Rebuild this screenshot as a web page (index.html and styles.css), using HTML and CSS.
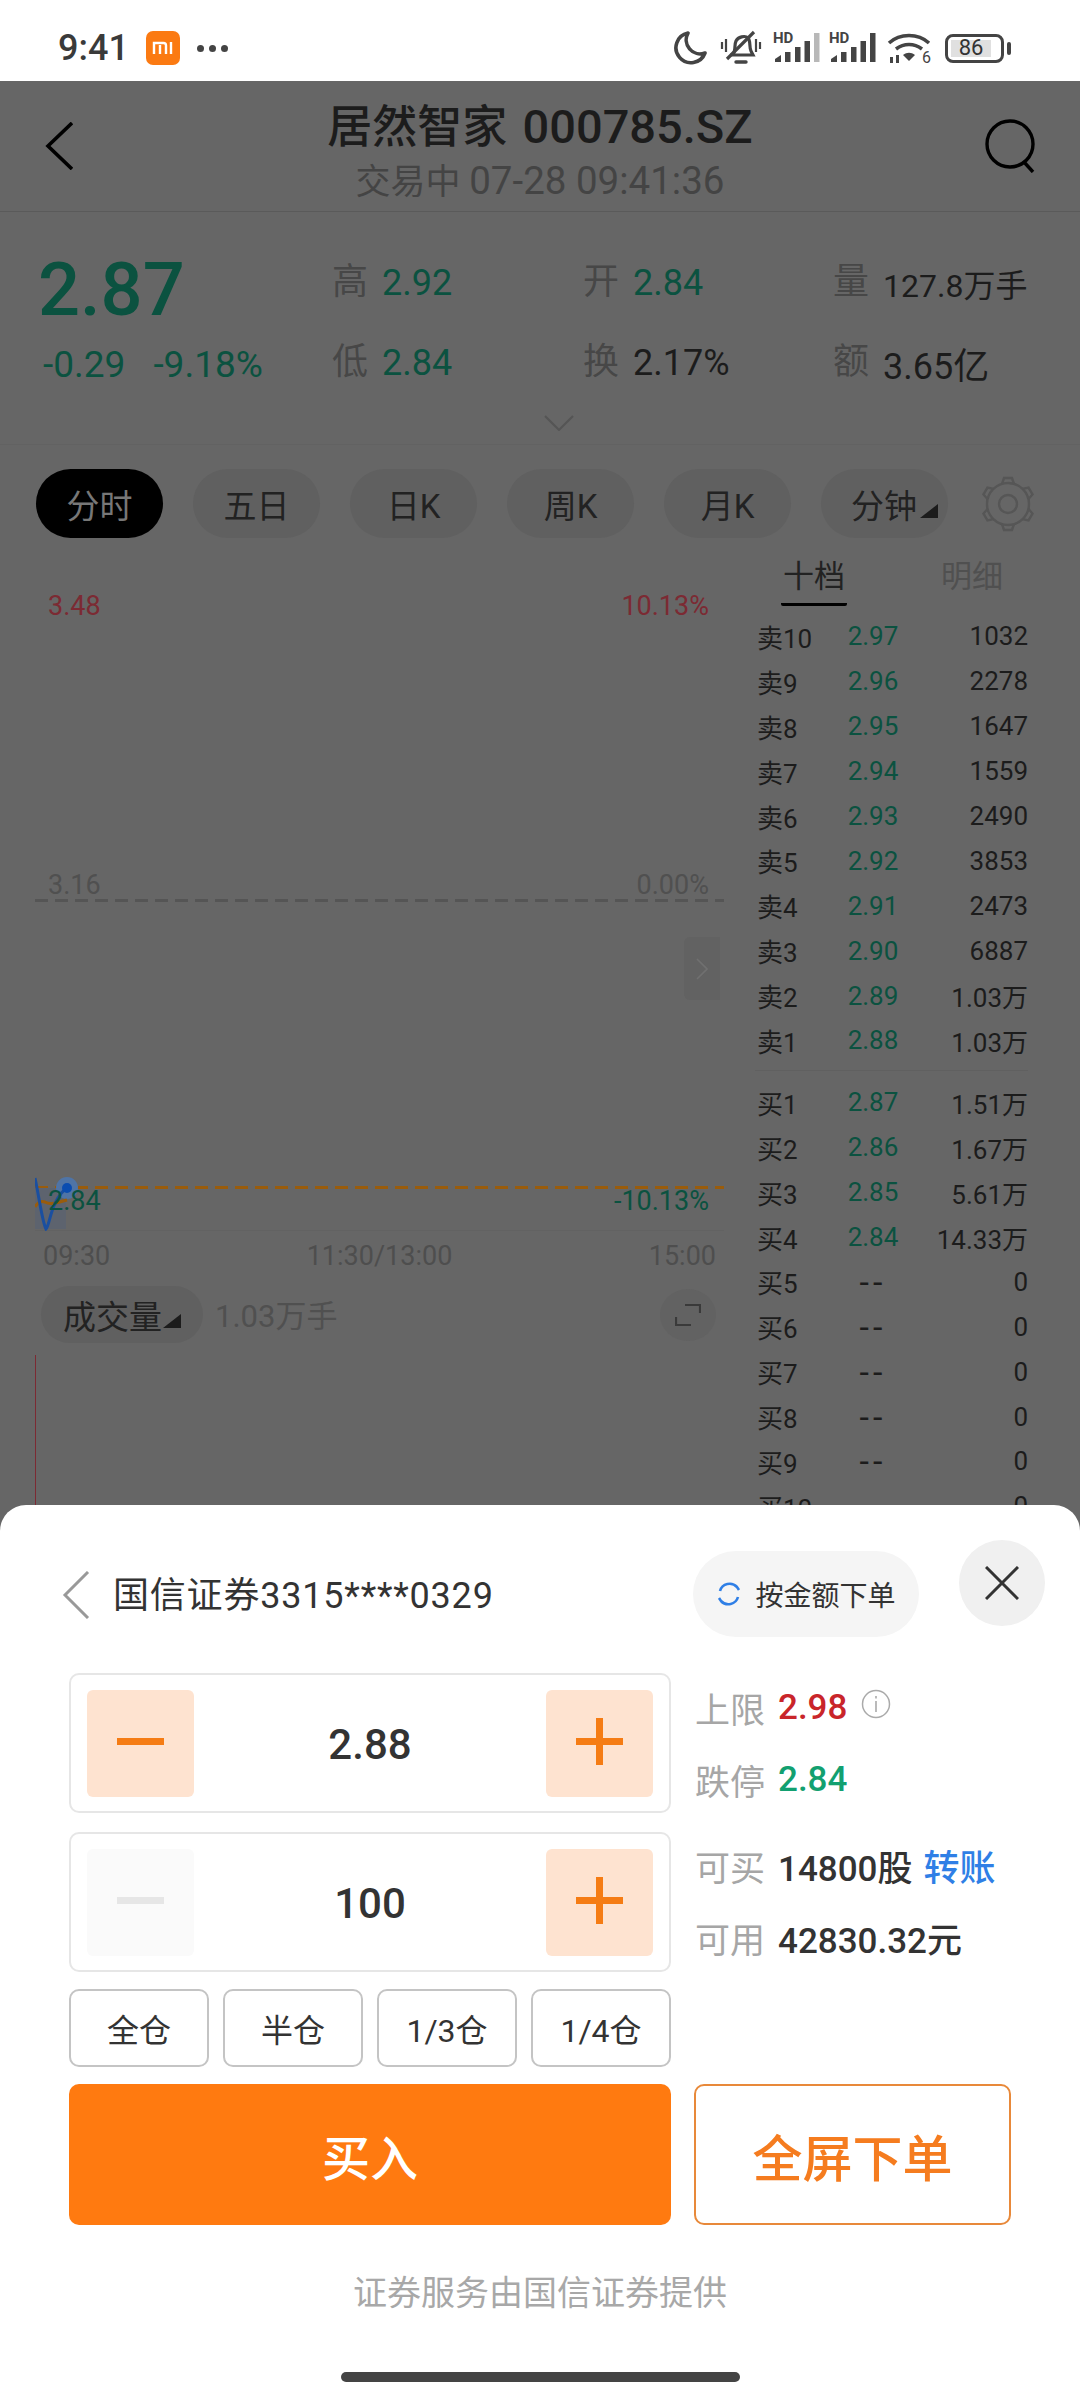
FILE: index.html
```html
<!DOCTYPE html>
<html lang="zh-CN">
<head>
    <meta charset="UTF-8">
    <meta name="viewport" content="width=device-width, initial-scale=1">
    <title>居然智家 000785.SZ</title>
    <link rel="stylesheet" href="styles.css">
</head>
<body>
<div class="phone">

    <div class="status">
        <span class="clock">9:41</span>
        <svg class="mi" width="34" height="34" viewBox="0 0 34 34">
            <rect width="34" height="34" rx="7" fill="#fb7a12"/>
            <path d="M8 23V12h9.500a2.500 2.500 0 0 1 2.500 2.500V23M14 14v9M25 11v12" fill="none" stroke="#fff" stroke-width="2.400"/>
        </svg>
        <span class="dots"><i></i><i></i><i></i></span>
        <span class="status-right">
            <svg width="36" height="36" viewBox="0 0 36 36"><path d="M15 3a15 15 0 1 0 17 20A14 14 0 0 1 15 3z" fill="none" stroke="#444" stroke-width="3.600" stroke-linejoin="round"/></svg>
            <svg class="ico-bell" width="42" height="38" viewBox="0 0 42 38">
                <path d="M13 25c3-3 1-9 3-13 2-4 9-6 12-3 3 3 1 10 3 13l2 4H11z" fill="none" stroke="#444" stroke-width="3.200"/>
                <path d="M7 30 34 3" stroke="#444" stroke-width="3.200"/>
                <path d="M16 33h10" stroke="#444" stroke-width="3.400" stroke-linecap="round"/>
                <path d="M2 13v7M6 10v13M36 10v13M40 13v7" stroke="#444" stroke-width="2.200"/>
            </svg>
            <svg class="ico-signal one" width="48" height="36" viewBox="0 -4 48 36">
                <text x="0" y="11" class="hd">HD</text>
                <path d="M2 27l6-4v7H2z" fill="#444"/>
                <path d="M12 20h5.500v10H12zM22 15h5.500v15H22zM31.500 9H37v21h-5.500z" fill="#444"/>
                <path d="M41 1h5.500v29H41z" fill="#b8b8b8"/>
            </svg>
            <svg class="ico-signal two" width="48" height="36" viewBox="0 -4 48 36">
                <text x="0" y="11" class="hd">HD</text>
                <path d="M2 27l6-4v7H2z" fill="#444"/>
                <path d="M12 20h5.500v10H12zM22 15h5.500v15H22zM31.500 9H37v21h-5.500zM41 1h5.500v29H41z" fill="#444"/>
            </svg>
            <svg class="ico-wifi" width="46" height="36" viewBox="0 0 46 36">
                <path d="M2 11C13 1 31 1 42 11M9 17c8-6 18-6 26 0" fill="none" stroke="#444" stroke-width="3.600"/>
                <path d="M16 23c4-3 8-3 12 0l-6 6z" fill="#444"/>
                <path d="M3 25h3v6H3zM9 23h3v8H9z" fill="#444"/>
                <text x="35" y="31" class="wifi-n">6</text>
            </svg>
            <span class="battery"><span class="battery-fill">86</span></span>
            <i class="battery-nub"></i>
        </span>
    </div>

    <header class="topbar">
        <svg class="back" width="28" height="48" viewBox="0 0 28 48"><path d="M27 1 3 24l24 23" fill="none" stroke="#000" stroke-width="3.600"/></svg>
        <div class="topbar-title">
            <h1>居然智家 <span>000785.SZ</span></h1>
            <p>交易中 <span>07-28 09:41:36</span></p>
        </div>
        <svg class="search" width="52" height="54" viewBox="0 0 52 54">
            <circle cx="25" cy="25" r="23" fill="none" stroke="#000" stroke-width="3.400"/>
            <path d="M39 43l9 10" stroke="#000" stroke-width="3.400"/>
        </svg>
    </header>

    <section class="quote">
        <div class="quote-main">
            <div class="price">2.87</div>
            <div class="change"><span>-0.29</span><span>-9.18%</span></div>
        </div>
        <div class="stats">
            <div class="stat"><b>高</b><span class="down">2.92</span></div>
            <div class="stat"><b>开</b><span class="down">2.84</span></div>
            <div class="stat"><b>量</b><span class="qty">127.8万手</span></div>
            <div class="stat"><b>低</b><span class="down">2.84</span></div>
            <div class="stat"><b>换</b><span>2.17%</span></div>
            <div class="stat"><b>额</b><span>3.65亿</span></div>
        </div>
    </section>
    <div class="more">
        <svg width="30" height="16" viewBox="0 0 30 16"><path d="M1 1l14 14L29 1" fill="none" stroke="#555" stroke-width="2"/></svg>
    </div>

    <nav class="tabs">
        <span class="tab active">分时</span>
        <span class="tab">五日</span>
        <span class="tab">日K</span>
        <span class="tab">周K</span>
        <span class="tab">月K</span>
        <span class="tab menu">分钟<i class="tri"></i></span>
        <svg class="gear" width="56" height="56" viewBox="0 0 56 56">
            <g fill="none" stroke="#565656" stroke-width="2.400">
                <circle cx="28" cy="28" r="9"/>
                <circle cx="28" cy="28" r="21"/>
                <path id="tooth" d="M22 8l2-6h8l2 6"/>
                <use href="#tooth" transform="rotate(60 28 28)"/>
                <use href="#tooth" transform="rotate(120 28 28)"/>
                <use href="#tooth" transform="rotate(180 28 28)"/>
                <use href="#tooth" transform="rotate(240 28 28)"/>
                <use href="#tooth" transform="rotate(300 28 28)"/>
            </g>
        </svg>
    </nav>

    <main class="market">
        <section class="chart">
            <div class="chart-row first up"><span>3.48</span><span>10.13%</span></div>
            <div class="chart-row middle flat"><span>3.16</span><span>0.00%</span></div>
            <div class="dash grey"></div>
            <div class="page-arrow">
                <svg width="12" height="22" viewBox="0 0 12 22"><path d="M1 1l10 10L1 21" fill="none" stroke="#707070" stroke-width="1.600"/></svg>
            </div>
            <div class="dash orange"></div>
            <svg class="trend" width="46" height="64" viewBox="0 0 46 64">
                <path d="M0 21h31v41H0z" fill="#5d636e"/>
                <circle cx="32" cy="21" r="11" fill="#4f74a6"/>
                <path d="M0 40c3-5 7-6 10-5 5 3 10 1 22-2" fill="none" stroke="#995c0c" stroke-width="3"/>
                <path d="M0 11c4 18 7 43 11 51 4-4 5-30 21-41" fill="none" stroke="#1a4fa0" stroke-width="3"/>
                <circle cx="32" cy="21" r="5" fill="#0b4db0"/>
            </svg>
            <div class="chart-row low green"><span>2.84</span><span>-10.13%</span></div>
            <div class="times"><span>09:30</span><span>11:30/13:00</span><span>15:00</span></div>
            <div class="volume">
                <span class="volume-pill">成交量<i class="tri"></i></span>
                <span class="volume-num">1.03万手</span>
                <span class="expand">
                    <svg width="26" height="24" viewBox="0 0 26 24"><path d="M10 2h15v8M16 22H1v-8" fill="none" stroke="#3a3a3a" stroke-width="2.200"/></svg>
                </span>
            </div>
            <div class="vol-bar"></div>
        </section>

        <aside class="book">
            <div class="book-tabs">
                <span class="book-tab active">十档</span>
                <span class="book-tab">明细</span>
            </div>
            <div class="book-list">
                <div class="row"><span>卖10</span><span class="down">2.97</span><span>1032</span></div>
                <div class="row"><span>卖9</span><span class="down">2.96</span><span>2278</span></div>
                <div class="row"><span>卖8</span><span class="down">2.95</span><span>1647</span></div>
                <div class="row"><span>卖7</span><span class="down">2.94</span><span>1559</span></div>
                <div class="row"><span>卖6</span><span class="down">2.93</span><span>2490</span></div>
                <div class="row"><span>卖5</span><span class="down">2.92</span><span>3853</span></div>
                <div class="row"><span>卖4</span><span class="down">2.91</span><span>2473</span></div>
                <div class="row"><span>卖3</span><span class="down">2.90</span><span>6887</span></div>
                <div class="row"><span>卖2</span><span class="down">2.89</span><span>1.03万</span></div>
                <div class="row"><span>卖1</span><span class="down">2.88</span><span>1.03万</span></div>
            </div>
            <div class="book-list bids">
                <div class="row"><span>买1</span><span class="down">2.87</span><span>1.51万</span></div>
                <div class="row"><span>买2</span><span class="down">2.86</span><span>1.67万</span></div>
                <div class="row"><span>买3</span><span class="down">2.85</span><span>5.61万</span></div>
                <div class="row"><span>买4</span><span class="down">2.84</span><span>14.33万</span></div>
                <div class="row"><span>买5</span><span class="nil">--</span><span>0</span></div>
                <div class="row"><span>买6</span><span class="nil">--</span><span>0</span></div>
                <div class="row"><span>买7</span><span class="nil">--</span><span>0</span></div>
                <div class="row"><span>买8</span><span class="nil">--</span><span>0</span></div>
                <div class="row"><span>买9</span><span class="nil">--</span><span>0</span></div>
                <div class="row"><span>买10</span><span class="nil">--</span><span>0</span></div>
            </div>
        </aside>
    </main>

    <!-- order sheet sits over the dimmed page -->
    <section class="sheet">
        <div class="sheet-head">
            <svg class="sheet-back" width="28" height="48" viewBox="0 0 28 48"><path d="M26 1 3 24l23 23" fill="none" stroke="#999" stroke-width="3"/></svg>
            <span class="account">国信证券3315****0329</span>
            <span class="by-amount">
                <svg width="26" height="26" viewBox="0 0 26 26">
                    <path d="M4 10a10 10 0 0 1 17-4l2 3" fill="none" stroke="#2f7fe6" stroke-width="2.600"/>
                    <path d="M22 16a10 10 0 0 1-17 4l-2-3" fill="none" stroke="#2f7fe6" stroke-width="2.600"/>
                </svg>
                按金额下单
            </span>
            <span class="close">
                <svg width="34" height="34" viewBox="0 0 34 34"><path d="M1 1l32 32M33 1 1 33" stroke="#333" stroke-width="3"/></svg>
            </span>
        </div>

        <div class="trade">
            <div class="trade-left">
                <div class="stepper">
                    <span class="step"><i class="minus"></i></span>
                    <span class="step-value">2.88</span>
                    <span class="step"><i class="plus"></i></span>
                </div>
                <div class="stepper">
                    <span class="step off"><i class="minus"></i></span>
                    <span class="step-value">100</span>
                    <span class="step"><i class="plus"></i></span>
                </div>
                <div class="ratios">
                    <span>全仓</span><span>半仓</span><span>1/3仓</span><span>1/4仓</span>
                </div>
            </div>
            <div class="info">
                <div class="info-row"><label>上限</label><b class="red">2.98</b>
                    <svg class="tip" width="30" height="30" viewBox="0 0 30 30">
                        <circle cx="15" cy="15" r="13.500" fill="none" stroke="#aaa" stroke-width="1.500"/>
                        <path d="M15 12v11M15 7v2.500" stroke="#aaa" stroke-width="1.600"/>
                    </svg>
                </div>
                <div class="info-row"><label>跌停</label><b class="green">2.84</b></div>
                <div class="info-row gap"><label>可买</label><b>14800股</b><a class="transfer">转账</a></div>
                <div class="info-row"><label>可用</label><b>42830.32元</b></div>
            </div>
        </div>

        <div class="actions">
            <button class="buy">买入</button>
            <button class="full">全屏下单</button>
        </div>

        <p class="provider">证券服务由国信证券提供</p>
        <div class="home-bar"></div>
    </section>
</div>
</body>
</html>
```

FILE: styles.css
```css
* {
    box-sizing: border-box;
}

html, body {
    margin: 0;
    padding: 0;
}

body {
    font-family: Roboto, "Noto Sans CJK SC", sans-serif;
    background-color: #666;
    color: #1c1c1c;
}

i {
    font-style: normal;
}

.phone {
    position: relative;
    width: 1080px;
    height: 2400px;
    overflow: hidden;
    background-color: #666;
}

/* status bar */
.status {
    height: 81px;
    background-color: #fff;
    display: flex;
    align-items: center;
    padding: 15px 69px 0 58px;
}

.clock {
    font-size: 36px;
    font-weight: 500;
    color: #3a3a3a;
}

.mi {
    margin-left: 17px;
}

.dots {
    display: flex;
    gap: 5px;
    margin-left: 17px;
}

.dots i {
    width: 7px;
    height: 7px;
    border-radius: 50%;
    background-color: #444;
}

.status-right {
    margin-left: auto;
    display: flex;
    align-items: center;
}

.ico-bell {
    margin-left: 11px;
}

.ico-signal {
    margin-top: -4px;
}

.ico-signal.one {
    margin-left: 11px;
}

.ico-signal.two {
    margin-left: 8px;
}

.ico-wifi {
    margin: 4px 0 0 10px;
}

.hd {
    font-size: 15px;
    font-weight: 700;
    fill: #444;
}

.wifi-n {
    font-size: 16px;
    fill: #444;
}

.battery {
    width: 59px;
    height: 29px;
    border: 3.500px solid #444;
    border-radius: 8px;
    padding: 3px;
    margin-left: 12px;
    display: flex;
}

.battery-fill {
    width: 40px;
    background-color: #e0e0e0;
    font-size: 22px;
    line-height: 16px;
    color: #333;
    text-align: center;
}

.battery-nub {
    width: 4px;
    height: 13px;
    border-radius: 2px;
    background-color: #444;
    margin-left: 3px;
}

/* header */
.topbar {
    height: 131px;
    border-bottom: 1px solid #5a5a5a;
    display: flex;
    align-items: center;
    justify-content: space-between;
    padding: 0 43px 0 45px;
}

.topbar-title {
    flex: 1;
    text-align: center;
    padding: 12px 0 0 22px;
}

.topbar-title h1 {
    margin: 0;
    font-size: 45px;
    line-height: 56px;
    font-weight: 500;
    color: #1c1c1c;
    white-space: nowrap;
}

.topbar-title h1 span {
    font-size: 47px;
    margin-left: 4px;
}

.topbar-title p {
    margin: 3px 0 0;
    font-size: 35px;
    line-height: 44px;
    color: #444;
    white-space: nowrap;
}

.topbar-title p span {
    font-size: 38.500px;
}

/* quote block */
.quote {
    height: 203px;
    display: flex;
    padding: 50px 0 0 38px;
}

.quote-main {
    width: 294px;
}

.price {
    font-size: 74px;
    line-height: 54px;
    margin-top: 1px;
    font-weight: 500;
    color: #0b5240;
}

.change {
    margin-top: 28px;
    display: flex;
    gap: 28px;
    font-size: 37px;
    line-height: 40px;
    padding-left: 5px;
    color: #0b5240;
}

.stats {
    display: grid;
    grid-template-columns: 251px 250px auto;
    grid-auto-rows: 40px;
    row-gap: 40px;
    padding-top: 1px;
}

.stat {
    display: flex;
    align-items: center;
    gap: 14px;
    font-size: 36px;
    color: #1c1c1c;
}

.stat .qty {
    font-size: 32px;
}

.stat b {
    font-size: 36px;
    line-height: 40px;
    margin-top: -2px;
    font-weight: 400;
    color: #474747;
}

.down {
    color: #0b5240;
}

.more {
    height: 30px;
    border-bottom: 1px solid #626262;
}

.more svg {
    display: block;
    margin-left: 544px;
}

/* period tabs */
.tabs {
    display: flex;
    align-items: center;
    padding: 24px 0 0 36px;
    gap: 30px;
}

.tab {
    width: 127px;
    height: 69px;
    border-radius: 35px;
    background-color: #606060;
    display: flex;
    align-items: center;
    justify-content: center;
    font-size: 33px;
    color: #222;
}

.tab.active {
    background-color: #000;
    color: #777;
}

.tab.menu {
    justify-content: flex-start;
    padding-left: 30px;
}

.tri {
    display: inline-block;
    width: 0;
    height: 0;
    flex: none;
    border-left: 18px solid transparent;
    border-bottom: 14px solid #1c1c1c;
    margin: 14px 0 0 3px;
}

.gear {
    margin-left: 2px;
}

/* chart and order book */
.market {
    display: flex;
    margin-top: 17px;
}

.chart {
    position: relative;
    width: 689px;
    margin-left: 35px;
    padding-top: 36px;
}

.chart-row {
    display: flex;
    justify-content: space-between;
    padding: 0 15px 0 13px;
    font-size: 27px;
    line-height: 30px;
}

.chart-row.first {
    height: 34px;
}

.chart-row.middle {
    margin-top: 245px;
    height: 29px;
}

.chart-row.low {
    position: relative;
    height: 25px;
    line-height: 24px;
}

.up {
    color: #7c2a33;
}

.flat {
    color: #505050;
}

.green {
    color: #0b5240;
}

.dash {
    height: 3px;
}

.dash.grey {
    background: repeating-linear-gradient(90deg, #555 0 13px, transparent 13px 20px);
}

.dash.orange {
    margin-top: 284px;
    background: repeating-linear-gradient(90deg, #995c0c 0 13px, transparent 13px 20px);
}

.page-arrow {
    position: absolute;
    left: 649px;
    top: 382px;
    width: 36px;
    height: 63px;
    border-radius: 6px 0 0 6px;
    background-color: #626262;
    display: flex;
    align-items: center;
    justify-content: center;
}

.trend {
    position: absolute;
    left: 0;
    top: 612px;
}

.times {
    margin-top: 16px;
    border-top: 1px solid #626262;
    padding: 10px 8px 0;
    display: flex;
    justify-content: space-between;
    font-size: 27px;
    line-height: 30px;
    color: #4e4e4e;
}

.volume {
    display: flex;
    align-items: center;
    margin-top: 15px;
    padding-left: 6px;
}

.volume-pill {
    width: 162px;
    height: 57px;
    border-radius: 29px;
    background-color: #606060;
    display: flex;
    align-items: center;
    padding-left: 22px;
    font-size: 33px;
    color: #222;
}

.volume-pill .tri {
    margin: 12px 0 0 1px;
}

.volume-num {
    margin: -3px 0 0 12px;
    font-size: 31px;
    color: #505050;
}

.expand {
    margin-left: auto;
    margin-right: 8px;
    width: 56px;
    height: 52px;
    border-radius: 50%;
    background-color: #626262;
    display: flex;
    align-items: center;
    justify-content: center;
}

.vol-bar {
    margin-top: 12px;
    width: 1px;
    height: 150px;
    background-color: #7c2a33;
}

.book {
    width: 273px;
    margin-left: 31px;
}

.book-tabs {
    height: 59px;
    display: flex;
    font-size: 31px;
    line-height: 44px;
}

.book-tab {
    color: #505050;
    margin-left: 94px;
    height: 51px;
}

.book-tab.active {
    color: #222;
    margin-left: 26px;
    padding: 0 2px;
    border-bottom: 3px solid #000;
    border-radius: 0 0 2px 2px;
}

.book-list.bids {
    margin-top: 7px;
    padding-top: 9px;
    border-top: 1px solid #606060;
}

.row {
    height: 44.900px;
    display: grid;
    grid-template-columns: 91px 54px 1fr;
    align-items: center;
    font-size: 26px;
    color: #1c1c1c;
}

.row span:nth-child(1) {
    padding-left: 2px;
    white-space: nowrap;
}

.row span:nth-child(2) {
    text-align: center;
}

.row span:nth-child(3) {
    text-align: right;
    white-space: nowrap;
}

.row .nil {
    font-size: 34px;
    line-height: 30px;
    letter-spacing: 4px;
}

/* order sheet */
.sheet {
    position: absolute;
    left: 0;
    right: 0;
    bottom: 0;
    height: 895px;
    background-color: #fff;
    border-radius: 26px 26px 0 0;
    padding: 35px 69px 0;
}

.sheet-head {
    height: 97px;
    display: flex;
    align-items: flex-start;
}

.sheet-back {
    margin: 31px 0 0 -7px;
    flex: none;
}

.account {
    margin: 32px 0 0 23px;
    font-size: 36px;
    line-height: 48px;
    color: #333;
    letter-spacing: 0.800px;
}

.by-amount {
    margin: 11px 0 0 auto;
    width: 226px;
    height: 86px;
    border-radius: 43px;
    background-color: #f5f5f5;
    display: flex;
    align-items: center;
    justify-content: center;
    gap: 13px;
    font-size: 28px;
    color: #333;
}

.close {
    margin: 0 -34px 0 40px;
    width: 86px;
    height: 86px;
    border-radius: 50%;
    background-color: #f0f0f0;
    display: flex;
    align-items: center;
    justify-content: center;
}

.trade {
    margin-top: 36px;
    display: flex;
    gap: 24px;
}

.trade-left {
    width: 602px;
}

.stepper {
    height: 140px;
    margin-bottom: 19px;
    border: 2px solid #e6e6e6;
    border-radius: 10px;
    display: flex;
    align-items: center;
    justify-content: space-between;
    padding: 0 16px;
}

.step {
    width: 107px;
    height: 107px;
    border-radius: 6px;
    background-color: #fee3d0;
    display: flex;
    align-items: center;
    justify-content: center;
}

.step.off {
    background-color: #fafafa;
}

.minus {
    width: 47px;
    height: 7px;
    margin-top: -4px;
    background-color: #f57c14;
}

.step.off .minus {
    background-color: #e6e6e6;
}

.plus {
    width: 47px;
    height: 47px;
    margin-top: -4px;
    background:
        linear-gradient(#f57c14, #f57c14) center / 100% 7px no-repeat,
        linear-gradient(#f57c14, #f57c14) center / 7px 100% no-repeat;
}

.step-value {
    margin-top: 3px;
    font-size: 42px;
    font-weight: 500;
    color: #333;
}

.ratios {
    display: grid;
    grid-template-columns: repeat(4, 1fr);
    gap: 14px;
    margin-top: -2px;
}

.ratios span {
    height: 78px;
    border: 2px solid #c4c4c4;
    border-radius: 10px;
    display: flex;
    align-items: center;
    justify-content: center;
    font-size: 32px;
    color: #333;
}

.info {
    margin-top: -2px;
}

.info-row {
    height: 72px;
    display: flex;
    align-items: center;
    font-size: 35px;
}

.info-row.gap {
    margin-top: 14px;
}

.info-row label {
    width: 83px;
    font-size: 35px;
    color: #a6a6a6;
}

.info-row b {
    font-weight: 500;
    color: #333;
}

.info-row .red {
    color: #c9252a;
}

.info-row .green {
    color: #12a070;
}

.tip {
    margin: -6px 0 0 14px;
}

.transfer {
    margin-left: 11px;
    font-size: 36px;
    font-weight: 500;
    color: #2f7fe6;
}

.actions {
    display: flex;
    gap: 23px;
    margin-top: 17px;
}

.actions button {
    height: 141px;
    border-radius: 10px;
    font-family: inherit;
    font-weight: 500;
    padding: 0;
}

.buy {
    width: 602px;
    border: none;
    background-color: #ff7a10;
    color: #fff;
    font-size: 48px;
}

.full {
    width: 317px;
    border: 2px solid #e8893a;
    background-color: #fff;
    color: #f57c1f;
    font-size: 50px;
}

.provider {
    margin: 43px 0 0;
    text-align: center;
    font-size: 34px;
    line-height: 50px;
    color: #a8a8a8;
}

.home-bar {
    width: 399px;
    height: 10px;
    margin: 54px auto 0;
    border-radius: 5px;
    background-color: #444;
}
```
